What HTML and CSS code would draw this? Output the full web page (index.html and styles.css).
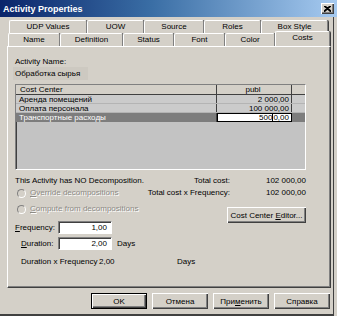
FILE: index.html
```html
<!DOCTYPE html>
<html lang="en">

<head>
  <meta charset="UTF-8">
  <title>Activity Properties</title>
  <link rel="stylesheet" href="styles.css">
</head>

<body>
  <div class="window">
    <div class="titlebar">
      <span class="title">Activity Properties</span>
      <span class="close-btn">
        <svg width="7" height="6" viewBox="0 0 7 6">
          <path d="M0 0 L7 6 M7 0 L0 6 M1 0 L7 5 M6 0 L0 5" stroke="#000" stroke-width="1.2" />
        </svg>
      </span>
    </div>

    <div class="tabs">
      <div class="tab-row back">
        <div class="tab w78">UDP Values</div>
        <div class="tab w57">UOW</div>
        <div class="tab w60">Source</div>
        <div class="tab w57">Roles</div>
        <div class="tab w67">Box Style</div>
      </div>
      <div class="tab-row front">
        <div class="tab w52">Name</div>
        <div class="tab w63">Definition</div>
        <div class="tab w51">Status</div>
        <div class="tab w51">Font</div>
        <div class="tab w50">Color</div>
        <div class="tab w55 active">Costs</div>
      </div>
    </div>

    <div class="panel">
      <div class="label">Activity Name:</div>
      <div class="name-box">Обработка сырья</div>

      <div class="grid">
        <div class="grid-row head">
          <div class="cell c1">Cost Center</div>
          <div class="cell c2 center">publ</div>
          <div class="cell c3"></div>
        </div>
        <div class="grid-row">
          <div class="cell c1">Аренда помещений</div>
          <div class="cell c2 num">2 000,00</div>
          <div class="cell c3"></div>
        </div>
        <div class="grid-row">
          <div class="cell c1">Оплата персонала</div>
          <div class="cell c2 num">100 000,00</div>
          <div class="cell c3"></div>
        </div>
        <div class="grid-row selected">
          <div class="cell c1">Транспортные расходы</div>
          <div class="cell c2 num editing">500<span class="caret"></span>0,00</div>
          <div class="cell c3"></div>
        </div>
      </div>

      <div class="bottom">
        <div class="left-col">
          <div class="line">This Activity has NO Decomposition.</div>
          <div class="line radio-line">
            <span class="radio"></span>
            <span class="disabled"><u>O</u>verride decompositions</span>
          </div>
          <div class="line radio-line second">
            <span class="radio"></span>
            <span class="disabled"><u>C</u>ompute from decompositions</span>
          </div>
          <div class="field-row first">
            <span class="field-label"><u>F</u>requency:</span>
            <span class="input">1,00</span>
          </div>
          <div class="field-row">
            <span class="field-label indent"><u>D</u>uration:</span>
            <span class="input">2,00</span>
            <span class="unit">Days</span>
          </div>
          <div class="product-row">
            <span class="product-label">Duration x Frequency</span>
            <span class="product-value">2,00</span>
            <span class="product-unit">Days</span>
          </div>
        </div>
        <div class="right-col">
          <div class="total-row">
            <span class="total-label">Total cost:</span>
            <span class="total-value">102 000,00</span>
          </div>
          <div class="total-row">
            <span class="total-label">Total cost x Frequency:</span>
            <span class="total-value">102 000,00</span>
          </div>
          <div class="editor-row">
            <span class="button editor"><span>Cost Center <u>E</u>ditor...</span></span>
          </div>
        </div>
      </div>
    </div>

    <div class="buttons">
      <span class="button default"><span>OK</span></span>
      <span class="button"><span>Отмена</span></span>
      <span class="button"><span>При<u>м</u>енить</span></span>
      <span class="button"><span>Справка</span></span>
    </div>
  </div>
</body>

</html>
```

FILE: styles.css
```css
* {
  margin: 0;
  padding: 0;
  box-sizing: border-box;
}

body {
  font-family: "Liberation Sans", Arial, sans-serif;
  font-size: 8px;
  color: #000;
  background-color: #d4d0c8;
}

.window {
  width: 337px;
  height: 316px;
  background-color: #d4d0c8;
  box-shadow: inset -3px 0 #d4d0c8, inset -4px 0 #404040, inset 0 -2px #404040;
}

/* title bar */
.titlebar {
  height: 17px;
  display: flex;
  align-items: center;
  justify-content: space-between;
  padding: 0 3px 0 3px;
  background: linear-gradient(to right, #0a246a 0%, #3a6ea5 45%, #a6caf0 100%);
}

.title {
  color: #fff;
  font-weight: bold;
  font-size: 9px;
}

.close-btn {
  width: 13px;
  height: 11px;
  background-color: #d4d0c8;
  display: flex;
  align-items: center;
  justify-content: center;
  box-shadow: inset 1px 1px #fff, inset -1px -1px #404040, inset -2px -2px #808080;
}

/* tabs */
.tabs {
  margin-top: 3px;
  padding-left: 9px;
}

.tab-row {
  display: flex;
  height: 13px;
}

.tab-row.front {
  margin-left: -1px;
}

.tab {
  height: 13px;
  line-height: 12px;
  text-align: center;
  border-top: 1px solid #fff;
  border-left: 1px solid #fff;
  border-right: 1px solid #808080;
  box-shadow: 1px 0 #404040;
  border-radius: 2px 2px 0 0;
  background-color: #d4d0c8;
}

.tab.active {
  height: 15px;
  margin-top: -2px;
  position: relative;
  z-index: 2;
  line-height: 11px;
}

.w50 { width: 50px; }
.w51 { width: 51px; }
.w52 { width: 52px; }
.w55 { width: 55px; }
.w57 { width: 57px; }
.w60 { width: 60px; }
.w63 { width: 63px; }
.w67 { width: 67px; }
.w78 { width: 78px; }

/* panel */
.panel {
  margin: 0 6px 0 7px;
  height: 242px;
  padding: 10px 24px 0 7px;
  border-top: 1px solid #fff;
  border-left: 1px solid #fff;
  border-right: 1px solid #404040;
  border-bottom: 1px solid #404040;
  box-shadow: inset -1px -1px #808080;
}

.label {
  line-height: 10px;
}

.name-box {
  margin: 0 0 0 -2px;
  width: 75px;
  height: 13px;
  line-height: 13px;
  padding-left: 2px;
  background-color: #cdc9c1;
}

/* cost grid */
.grid {
  margin-top: 4px;
  height: 86px;
  background-color: #c3c3c3;
  border-top: 1px solid #808080;
  border-left: 1px solid #808080;
  border-right: 1px solid #fff;
  border-bottom: 1px solid #fff;
  box-shadow: inset 1px 1px #404040;
}

.grid-row {
  display: flex;
  height: 9px;
  line-height: 9px;
  background-color: #cbcbcb;
  border-bottom: 1px solid #b4b4b4;
}

.grid-row.head {
  height: 10px;
  line-height: 10px;
  background-color: #d4d0c8;
  border-bottom: 1px solid #404040;
}

.grid-row.selected {
  background-color: #7d7d7d;
  color: #fff;
  border-bottom: none;
}

.cell {
  white-space: nowrap;
  overflow: hidden;
}

.c1 {
  width: 201px;
  padding-left: 3px;
  border-right: 1px solid #404040;
}

.c2 {
  width: 75px;
  padding-right: 2px;
  border-right: 1px solid #404040;
}

.c3 {
  flex: 1;
}

.head .c1 {
  margin-left: 1px;
  width: 200px;
}

.center {
  text-align: center;
}

.num {
  text-align: right;
}

.editing {
  background-color: #fff;
  color: #000;
  border: 1px solid #000;
  line-height: 7px;
  height: 9px;
}

.caret {
  display: inline-block;
  width: 1px;
  height: 7px;
  background-color: #000;
  vertical-align: top;
}

/* lower section */
.bottom {
  display: flex;
  margin-top: 5px;
}

.left-col {
  width: 125px;
}

.right-col {
  flex: 1;
}

.line {
  height: 12px;
  line-height: 12px;
  white-space: nowrap;
}

.radio-line {
  display: flex;
  align-items: center;
  gap: 4px;
  padding-left: 2px;
}

.radio-line.second {
  margin-top: 4px;
}

.radio {
  width: 9px;
  height: 9px;
  border-radius: 50%;
  background-color: #d4d0c8;
  border: 1px solid;
  border-color: #808080 #fff #fff #808080;
}

.disabled {
  color: #8c8a85;
  text-shadow: 1px 1px #fff;
}

.field-row {
  display: flex;
  align-items: center;
  height: 13px;
  margin-top: 3px;
}

.field-row.first {
  margin-top: 6px;
}

.field-label {
  width: 43px;
}

.field-label.indent {
  padding-left: 6px;
}

.input {
  width: 54px;
  height: 13px;
  line-height: 11px;
  text-align: right;
  padding-right: 4px;
  background-color: #fff;
  border-top: 1px solid #808080;
  border-left: 1px solid #808080;
  border-right: 1px solid #fff;
  border-bottom: 1px solid #fff;
  box-shadow: inset 1px 1px #404040;
}

.unit {
  margin-left: 5px;
}

.product-row {
  display: flex;
  margin-top: 7px;
  line-height: 10px;
  padding-left: 6px;
  white-space: nowrap;
}

.product-row span {
  flex-shrink: 0;
}

.product-label {
  width: 78px;
}

.product-value {
  width: 78px;
}

.total-row {
  display: flex;
  height: 12px;
  line-height: 12px;
  white-space: nowrap;
}

.total-label {
  width: 90px;
  text-align: right;
}

.total-value {
  flex: 1;
  text-align: right;
}

.editor-row {
  display: flex;
  justify-content: flex-end;
  margin-top: 8px;
}

/* buttons */
.button {
  display: inline-flex;
  align-items: center;
  justify-content: center;
  height: 16px;
  background-color: #d4d0c8;
  box-shadow: inset 1px 1px #fff, inset -1px -1px #404040, inset -2px -2px #808080;
  white-space: nowrap;
}

.button.editor {
  width: 79px;
}

.buttons {
  display: flex;
  justify-content: flex-end;
  gap: 5px;
  margin-top: 5px;
  padding-right: 7px;
}

.buttons .button {
  width: 56px;
}

.button.default {
  border: 1px solid #000;
}
```
